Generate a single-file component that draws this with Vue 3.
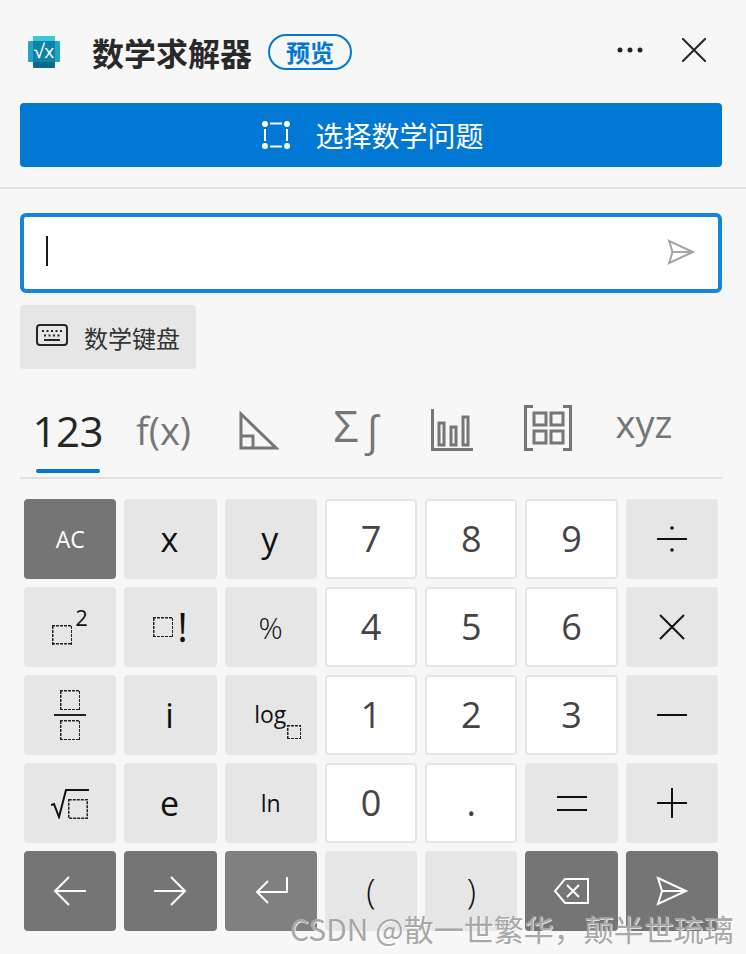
<script setup>
const icons = {
  divide: 'M5 20h30M19.2 9a.8.8 0 1 0 1.6 0a.8.8 0 1 0 -1.6 0M19.2 31a.8.8 0 1 0 1.6 0a.8.8 0 1 0 -1.6 0',
  times: 'M8 8l24 24M32 8L8 32',
  minus: 'M5 20h30',
  equals: 'M5 14h30M5 27h30',
  plus: 'M5 20h30M20 5v30',
  left: 'M36 20H6M19 6L5 20l14 14',
  right: 'M4 20h30M21 6l14 14-14 14',
  enter: 'M36 6v15H6M17 10L6 21l11 11',
  back: 'M36 8H13L3 20l10 12h23zM15 14l12 12M27 14L15 26',
  send: 'M6 7l28 13L6 33l4-13zM10 20h24'
}

const keys = [
  { text: 'AC', tone: 'dark', size: 'small' },
  { text: 'x', size: 'var' },
  { text: 'y', size: 'var' },
  { text: '7', tone: 'white' },
  { text: '8', tone: 'white' },
  { text: '9', tone: 'white' },
  { icon: 'divide' },
  { slot: 'square' },
  { slot: 'factorial' },
  { text: '%', size: 'mid' },
  { text: '4', tone: 'white' },
  { text: '5', tone: 'white' },
  { text: '6', tone: 'white' },
  { icon: 'times' },
  { slot: 'fraction' },
  { text: 'i', size: 'var' },
  { slot: 'log' },
  { text: '1', tone: 'white' },
  { text: '2', tone: 'white' },
  { text: '3', tone: 'white' },
  { icon: 'minus' },
  { slot: 'root' },
  { text: 'e', size: 'var' },
  { text: 'ln', size: 'small' },
  { text: '0', tone: 'white' },
  { text: '.', tone: 'white' },
  { icon: 'equals' },
  { icon: 'plus' },
  { icon: 'left', tone: 'dark' },
  { icon: 'right', tone: 'dark' },
  { icon: 'enter', tone: 'hover' },
  { text: '(', size: 'paren' },
  { text: ')', size: 'paren' },
  { icon: 'back', tone: 'dark' },
  { icon: 'send', tone: 'dark' }
]
</script>

<template>
  <div class="page">
    <header class="header">
      <svg class="logo" viewBox="0 0 32 32">
        <rect x="5" y="0" width="22" height="8" fill="#3cc8d8" />
        <rect x="0" y="5" width="32" height="21" rx="1" fill="#22a5c4" />
        <rect x="5" y="24" width="22" height="8" rx="1" fill="#0b6a8e" />
        <rect x="5" y="5" width="22" height="21" fill="#0c83a8" />
        <text x="16" y="22" text-anchor="middle" font-size="19" fill="#fff" font-family="Open Sans, sans-serif">√x</text>
      </svg>
      <h1 class="title">数学求解器</h1>
      <span class="badge">预览</span>
      <svg class="more" viewBox="0 0 26 6">
        <circle cx="3" cy="3" r="2.5" /><circle cx="13" cy="3" r="2.5" /><circle cx="23" cy="3" r="2.5" />
      </svg>
      <svg class="close" viewBox="0 0 24 24"><path d="M0 0l24 24M24 0L0 24" /></svg>
    </header>

    <button class="select-btn">
      <svg viewBox="0 0 28 28">
        <circle cx="3" cy="3" r="3" /><circle cx="25" cy="3" r="3" /><circle cx="3" cy="25" r="3" /><circle cx="25" cy="25" r="3" />
        <path d="M8 2.500h12M8 25.500h12M3 8v12M25 8v12" />
      </svg>
      <span>选择数学问题</span>
    </button>
  </div>

  <div class="divider"></div>

  <div class="page">
    <div class="input">
      <i class="caret"></i>
      <svg class="input-send" viewBox="0 0 40 40"><path d="M6 7l28 13L6 33l4-13zM10 20h24" /></svg>
    </div>

    <button class="kbd-btn">
      <svg viewBox="0 0 32 22">
        <rect x="1" y="1" width="30" height="20" rx="3" />
        <path class="kbd-dots" d="M6 7h20M8 11.500h16" />
        <path d="M8 16h16" />
      </svg>
      <span>数学键盘</span>
    </button>

    <nav class="tabs">
      <div class="tab active">123</div>
      <div class="tab">f(x)</div>
      <div class="tab">
        <svg class="triangle" viewBox="0 0 40 40"><path d="M2 4v34h35zM2 26h12v12" /></svg>
      </div>
      <div class="tab sigma"><span>Σ</span><span class="integral">∫</span></div>
      <div class="tab">
        <svg class="bars" viewBox="0 0 42 42"><path d="M1.500 0v40.500H42M8 14h5v22H8zM20 18h5v18h-5zM32 8h5v28h-5z" /></svg>
      </div>
      <div class="tab">
        <svg class="matrix" viewBox="0 0 48 46"><path d="M9 1.500H1.500v43H9M39 1.500h7.500v43H39M10 8h12v12H10zM27 8h12v12H27zM10 26h12v12H10zM27 26h12v12H27z" /></svg>
      </div>
      <div class="tab xyz">xyz</div>
    </nav>

    <div class="keypad">
      <button v-for="(k, i) in keys" :key="i" class="key" :class="[k.tone, k.size]">
        <svg v-if="k.icon" class="key-icon" viewBox="0 0 40 40"><path :d="icons[k.icon]" /></svg>

        <span v-else-if="k.slot === 'square'" class="combo square"><i class="box"></i><sup>2</sup></span>
        <span v-else-if="k.slot === 'factorial'" class="combo factorial"><i class="box"></i><b>!</b></span>
        <span v-else-if="k.slot === 'fraction'" class="fraction"><i class="box"></i><em></em><i class="box"></i></span>
        <span v-else-if="k.slot === 'log'" class="combo log">log<i class="box tiny"></i></span>
        <svg v-else-if="k.slot === 'root'" class="root" viewBox="0 0 38 30">
          <path d="M0 16l3-1 5 13L15 1h23" />
          <rect x="17.750" y="10.750" width="18.500" height="18.500" />
        </svg>

        <template v-else>{{ k.text }}</template>
      </button>
    </div>
  </div>

  <div class="watermark">CSDN @散一世繁华，颠半世琉璃</div>
</template>

<style scoped>
.page {
  padding: 0 24px 0 20px;
  font-family: "Open Sans", "Noto Sans CJK SC", sans-serif;
}

.header {
  display: flex;
  align-items: center;
  height: 103px;
  padding: 0 8px;
  color: #262626;
}

.logo {
  width: 32px;
  height: 32px;
  margin-right: 32px;
}

.title {
  margin: 0;
  font: 700 32px/40px "Noto Sans CJK SC", sans-serif;
  color: #292929;
}

.badge {
  margin-left: 16px;
  width: 84px;
  height: 36px;
  box-sizing: border-box;
  border: 2px solid #0078d4;
  border-radius: 18px;
  color: #0078d4;
  font: 700 24px/31px "Noto Sans CJK SC", sans-serif;
  text-align: center;
}

.more {
  width: 26px;
  height: 6px;
  margin: -4px 0 0 auto;
  fill: #262626;
}

.close {
  width: 24px;
  height: 24px;
  margin: -4px 8px 0 39px;
  fill: none;
  stroke: #262626;
  stroke-width: 2;
}

.select-btn {
  display: flex;
  align-items: center;
  justify-content: center;
  gap: 25px;
  width: 100%;
  height: 64px;
  padding: 0 0 0 4px;
  border: 0;
  border-radius: 4px;
  background: #0078d4;
  color: #fff;
  font: 400 28px "Noto Sans CJK SC", sans-serif;
}

.select-btn svg {
  width: 28px;
  height: 28px;
  fill: #fff;
}

.select-btn path {
  fill: none;
  stroke: #fff;
  stroke-width: 2;
}

.divider {
  height: 2px;
  margin: 20px 0 24px;
  background: #e1e1e1;
}

.input {
  display: flex;
  align-items: center;
  justify-content: space-between;
  height: 80px;
  box-sizing: border-box;
  padding: 0 20px 0 22px;
  border: 4px solid #1584dc;
  border-radius: 6px;
  background: #fff;
}

.caret {
  width: 2px;
  height: 30px;
  margin-top: -4px;
  background: #1a1a1a;
}

.input-send {
  width: 34px;
  height: 34px;
  margin-top: -2px;
  fill: none;
  stroke: #a6a6a6;
  stroke-width: 2.500;
}

.kbd-btn {
  display: flex;
  align-items: center;
  gap: 16px;
  width: 176px;
  height: 64px;
  margin-top: 12px;
  padding: 0 16px;
  border: 0;
  border-radius: 4px;
  background: #e6e6e6;
  color: #333;
  font: 400 24px "Noto Sans CJK SC", sans-serif;
}

.kbd-btn svg {
  width: 32px;
  height: 22px;
  margin-top: -4px;
  fill: none;
  stroke: #262626;
  stroke-width: 2;
}

.kbd-dots {
  stroke-dasharray: 2 2.500;
}

.tabs {
  display: grid;
  grid-template-columns: repeat(7, 95.700px);
  height: 108px;
  border-bottom: 2px solid #e1e1e1;
  box-sizing: content-box;
}

.tab {
  position: relative;
  display: flex;
  align-items: center;
  justify-content: center;
  height: 108px;
  padding-top: 14px;
  box-sizing: border-box;
  color: #767676;
  font-size: 38px;
}

.tab.active {
  color: #262626;
  font-size: 42px;
  letter-spacing: -0.500px;
}

.tab.active::after {
  content: "";
  position: absolute;
  left: 16px;
  right: 16px;
  bottom: 4px;
  height: 4px;
  border-radius: 2px;
  background: #0078d4;
}

.tab svg {
  fill: none;
  stroke: #767676;
}

.triangle {
  width: 40px;
  height: 40px;
  stroke-width: 3;
}

.bars {
  width: 42px;
  height: 42px;
  margin-left: 2px;
  stroke-width: 3;
}

.matrix {
  width: 48px;
  height: 46px;
  margin: -4px 0 0 3px;
  stroke-width: 3;
}

.xyz {
  padding: 0 0 0 4px;
}

.sigma {
  gap: 6px;
  padding: 4px 0 0 4px;
  font-size: 44px;
}

.integral {
  font-size: 42px;
  margin-top: 8px;
}

.keypad {
  display: grid;
  grid-template-columns: repeat(7, 1fr);
  grid-auto-rows: 80px;
  gap: 8px;
  margin: 20px 4px 0;
}

.key {
  display: flex;
  align-items: center;
  justify-content: center;
  padding: 0;
  border: 0;
  border-radius: 4px;
  background: #e6e6e6;
  color: #111;
  font-family: inherit;
  font-size: 28px;
}

.key.white {
  padding-bottom: 2px;
  border: 2px solid #e6e6e6;
  background: #fff;
  color: #444;
  font-size: 36px;
}

.key.dark,
.key.hover {
  color: #fff;
}

.key.dark {
  background: #757575;
}

.key.hover {
  background: #808080;
}

.key.var {
  padding-right: 2px;
  font-size: 34px;
}

.key.small {
  font-size: 23px;
}

.key.mid {
  font-size: 30px;
  font-weight: 300;
}

.key.paren {
  font-size: 34px;
  font-weight: 300;
}

.key-icon {
  width: 40px;
  height: 40px;
  fill: none;
  stroke: #111;
  stroke-width: 2;
}

.key.dark .key-icon,
.key.hover .key-icon {
  stroke: #fff;
}

.box {
  display: block;
  flex: none;
  width: 20px;
  height: 20px;
  background:
    repeating-linear-gradient(90deg, #222 0 3px, transparent 3px 4px) top / 100% 1.500px no-repeat,
    repeating-linear-gradient(90deg, #222 0 3px, transparent 3px 4px) bottom / 100% 1.500px no-repeat,
    repeating-linear-gradient(0deg, #222 0 3px, transparent 3px 4px) left / 1.500px 100% no-repeat,
    repeating-linear-gradient(0deg, #222 0 3px, transparent 3px 4px) right / 1.500px 100% no-repeat;
}

.box.tiny {
  width: 14px;
  height: 14px;
  margin: 23px 0 0 1px;
}

.combo {
  display: flex;
  line-height: 1;
}

.square {
  align-items: flex-start;
  gap: 3px;
  height: 37px;
}

.square .box {
  margin-top: 16px;
}

.square sup {
  font-size: 22px;
  line-height: 16px;
}

.factorial {
  align-items: center;
  gap: 4px;
}

.factorial b {
  font-weight: 400;
  font-size: 40px;
}

.fraction {
  display: flex;
  flex-direction: column;
  align-items: center;
  width: 32px;
}

.fraction em {
  width: 32px;
  height: 2px;
  margin: 4px 0;
  background: #222;
}

.log {
  align-items: flex-start;
  margin: 11px 0 0 14px;
  font-size: 23px;
  line-height: 24px;
}

.root {
  width: 38px;
  height: 30px;
  margin-top: 2px;
  fill: none;
}

.root path {
  stroke: #111;
  stroke-width: 2;
}

.root rect {
  stroke: #222;
  stroke-width: 1.500;
  stroke-dasharray: 3 1;
}

.watermark {
  position: absolute;
  left: 290px;
  top: 909px;
  color: #a8a8a8;
  font: 400 30px/38px "Noto Sans CJK SC", sans-serif;
  white-space: nowrap;
  text-shadow: 1px 1px 0 rgba(255, 255, 255, 0.8);
  pointer-events: none;
}
</style>

<style>
html,
body {
  margin: 0;
  background: #f7f7f7;
}
</style>
